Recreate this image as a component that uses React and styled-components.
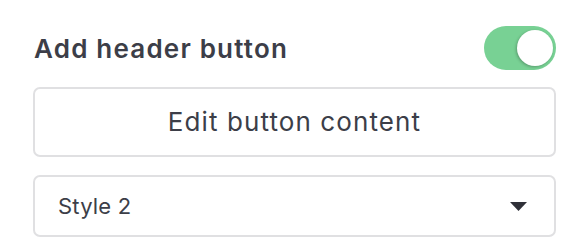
import React, { useState } from "react";
import styled, { createGlobalStyle } from "styled-components";

const Global = createGlobalStyle`
  html, body { margin: 0; padding: 0; background: #ffffff; }
  body { font-family: Inter, "Noto Sans", sans-serif; -webkit-font-smoothing: antialiased; }
  * { box-sizing: border-box; }
`;

const Panel = styled.div`
  width: 574px;
  padding: 26px 18px 0 33px;
  display: flex;
  flex-direction: column;
`;

const HeaderRow = styled.div`
  display: flex;
  align-items: center;
  justify-content: space-between;
  height: 44px;
  margin-bottom: 17px;
`;

const Title = styled.h2`
  margin: 0;
  padding-left: 1px;
  font-size: 26px;
  font-weight: 600;
  color: #3c3e48;
  letter-spacing: 1.2px;
`;

const Switch = styled.button`
  width: 72px;
  height: 44px;
  border-radius: 22px;
  border: none;
  padding: 4px;
  background: ${(p) => (p.$on ? "#78d194" : "#d5d7dc")};
  display: flex;
  justify-content: ${(p) => (p.$on ? "flex-end" : "flex-start")};
  align-items: center;
  cursor: pointer;
`;

const Knob = styled.span`
  width: 36px;
  height: 36px;
  border-radius: 50%;
  background: #ffffff;
  box-shadow: -1px 1px 3px rgba(0, 0, 0, 0.25);
  margin-right: -1px;
`;

const OutlineButton = styled.button`
  width: 523px;
  height: 70px;
  border: 2px solid #e0e0e2;
  border-radius: 7px;
  background: #fff;
  font-family: Inter, "Noto Sans", sans-serif;
  font-size: 26px;
  font-weight: 400;
  color: #3c3e48;
  letter-spacing: 1.1px;
  margin-bottom: 18px;
  padding: 0 0 2px;
  cursor: pointer;
`;

const Select = styled.div`
  width: 523px;
  height: 62px;
  border: 2px solid #e0e0e2;
  border-radius: 7px;
  display: flex;
  align-items: center;
  justify-content: space-between;
  padding: 0 27px 0 23px;
  font-size: 22px;
  letter-spacing: 0.2px;
  color: #3c3e48;
`;

const Caret = styled.svg`
  width: 17px;
  height: 9px;
  display: block;
`;

export default function App() {
  const [on, setOn] = useState(true);
  return (
    <>
      <Global />
      <Panel>
        <HeaderRow>
          <Title>Add header button</Title>
          <Switch $on={on} onClick={() => setOn(!on)} aria-label="toggle">
            <Knob />
          </Switch>
        </HeaderRow>
        <OutlineButton>Edit button content</OutlineButton>
        <Select>
          <span>Style 2</span>
          <Caret viewBox="0 0 17 9">
            <path d="M0 0 H17 L8.5 9 Z" fill="#2f3038" />
          </Caret>
        </Select>
      </Panel>
    </>
  );
}
